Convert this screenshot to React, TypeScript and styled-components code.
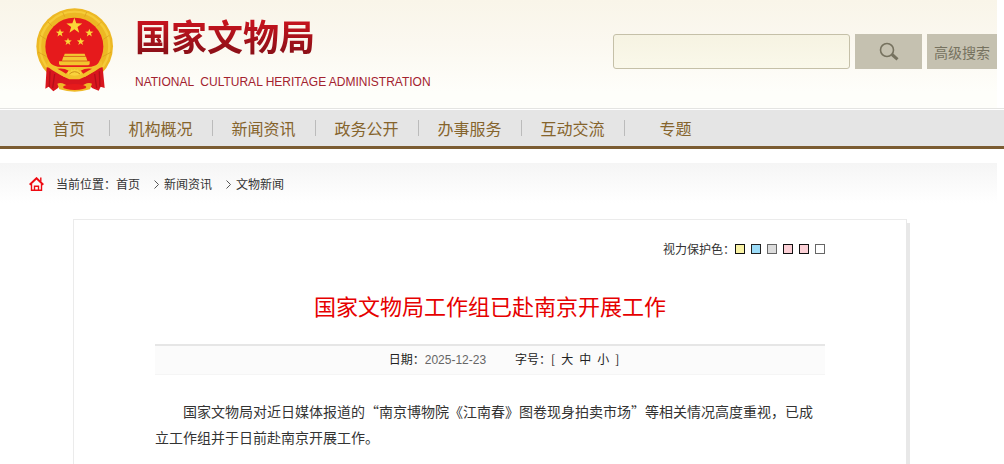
import React from 'react';
import styled, { createGlobalStyle } from 'styled-components';

const GlobalStyle = createGlobalStyle`
  * { box-sizing: border-box; }
  html { background: #fff; }
  body {
    margin: 0;
    overflow-x: hidden;
    color: #333;
    font: 12px/16px "Noto Sans CJK SC", "Liberation Sans", sans-serif;
  }
  a { color: inherit; text-decoration: none; }
  ul, ol, h1, h2, p { margin: 0; padding: 0; list-style: none; }
`;

const Header = styled.header`
  display: flex;
  justify-content: space-between;
  align-items: flex-start;
  height: 108px;
  margin-right: 7px;
  padding-left: 36px;
  background: linear-gradient(#f9f5e9, #fbf8f0 40%, #fefefa 85%, #fefefa);
`;

const Brand = styled.a`
  display: flex;
  gap: 21px;
  padding-top: 8px;
`;

const Emblem = styled.svg`
  display: block;
  width: 78px;
  height: 84px;
`;

const BrandText = styled.div`
  display: flex;
  flex-direction: column;
  gap: 18px;
  padding-top: 6px;
`;

const SiteName = styled.h1`
  font-size: 36px;
  line-height: 42px;
  font-weight: 700;
  color: transparent;
  background: linear-gradient(#c8141e 15%, #8e1018 90%);
  background-clip: text;
  -webkit-background-clip: text;
`;

const SiteNameEn = styled.span`
  font: 12px/16px "Liberation Sans", Arial, sans-serif;
  color: #a3222f;
  white-space: pre;
`;

const SearchForm = styled.form`
  display: flex;
  gap: 5px;
  padding-top: 34px;
`;

const SearchInput = styled.input`
  width: 237px;
  height: 35px;
  padding: 0 10px;
  border: 1px solid #c5c0a8;
  border-radius: 3px;
  background: linear-gradient(#f6f3e2, #faf8ea);
  font: inherit;
  outline: none;
`;

const SearchButton = styled.button<{ $width: number }>`
  display: flex;
  align-items: center;
  justify-content: center;
  width: ${(p) => p.$width}px;
  height: 35px;
  padding: 0;
  border: 0;
  background: #c5c1b0;
  color: #76725f;
  font: 14px/20px "Noto Sans CJK SC", sans-serif;
  white-space: nowrap;
  cursor: pointer;
`;

const Nav = styled.nav`
  margin-bottom: 14px;
  border-top: 1px solid #e4e4e2;
  border-bottom: 3px solid #7b5c32;
  padding-top: 1px;
`;

const NavList = styled.ul`
  display: flex;
  align-items: center;
  height: 36px;
  padding-left: 30px;
  background: #e5e5e5;
`;

const NavItem = styled.li<{ $first?: boolean }>`
  width: ${(p) => (p.$first ? 79 : 103)}px;
  padding-right: 1px;
  border-left: ${(p) => (p.$first ? '0' : '1px solid #bbb')};
  height: 16px;
  font-size: 16px;
  line-height: 16px;
  text-align: center;
  color: #85642c;
`;

const Breadcrumb = styled.nav`
  display: flex;
  align-items: center;
  height: 40px;
  margin: 0 7px 16px 0;
  padding: 2px 0 0 29px;
  background: linear-gradient(#f5f5f5, #fff);
`;

const HomeIcon = styled.svg`
  width: 15px;
  height: 14px;
  margin-right: 12px;
`;

const Trail = styled.ol`
  display: flex;
`;

const Arrow = styled.svg`
  width: 5px;
  height: 9px;
  margin: 0 5px 0 14px;
`;

const Card = styled.main`
  min-height: 260px;
  margin: 0 97px 0 73px;
  padding: 21px 81px 24px 81px;
  border: 1px solid #ebebeb;
  border-right-color: #e8e8e8;
  box-shadow: 3px 4px 0 #e8e8e8;
`;

const ColorPicker = styled.div`
  display: flex;
  justify-content: flex-end;
  margin-bottom: 32px;
`;

const Swatches = styled.div`
  display: flex;
  align-items: center;
  gap: 6px;
  height: 16px;
`;

const Swatch = styled.button<{ $fill: string; $line: string }>`
  width: 10px;
  height: 10px;
  padding: 0;
  border: 1px solid ${(p) => p.$line};
  background: ${(p) => p.$fill};
  cursor: pointer;
`;

const Title = styled.h2`
  margin-bottom: 22px;
  font-size: 22px;
  line-height: 33px;
  font-weight: 400;
  text-align: center;
  color: #e60000;
`;

const Meta = styled.div`
  display: flex;
  justify-content: center;
  gap: 29px;
  height: 31px;
  padding: 5px 0 0 28px;
  border-top: 2px solid #e6e6e6;
  border-bottom: 1px solid #f5f5f5;
  background: #fbfbfb;
  color: #222;
`;

const DateText = styled.time`
  font-family: "Liberation Sans", Arial, sans-serif;
  color: #666;
`;

const SizePicker = styled.span`
  display: flex;
  align-items: flex-start;
  gap: 6px;
`;

const SizeButton = styled.button`
  height: 16px;
  padding: 0;
  border: 0;
  background: none;
  color: inherit;
  font: inherit;
  line-height: 16px;
  cursor: pointer;
`;

const Paragraph = styled.p`
  margin-top: 23px;
  font-size: 14px;
  line-height: 26px;
  text-indent: 2em;
`;

const star = (cx: number, cy: number, r: number) =>
  Array.from({ length: 10 }, (_, i) => {
    const rad = i % 2 ? r * 0.4 : r;
    const a = (Math.PI / 5) * i - Math.PI / 2;
    return `${(cx + rad * Math.cos(a)).toFixed(1)},${(cy + rad * Math.sin(a)).toFixed(1)}`;
  }).join(' ');

const STARS: [number, number, number][] = [
  [163, 78, 25],
  [120, 99, 13],
  [208, 99, 13],
  [144, 125, 12],
  [182, 125, 12],
];

const NationalEmblem = () => (
  <Emblem viewBox="48 24 234 252" aria-hidden="true">
    <ellipse cx="164" cy="139" rx="115" ry="114" fill="#edb824" />
    <ellipse cx="164" cy="139" rx="104" ry="104" fill="none" stroke="#f5cb38" strokeWidth="7" />
    <g fill="none" stroke="#d79c1c" strokeWidth="2">
      <path d="M54 156l26 14M274 156l-26 14M60 106l18 12M268 106l-18 12M84 66l12 12M244 66l-12 12M128 36l6 14M200 36l-6 14" />
    </g>
    <circle cx="163" cy="140" r="87" fill="#e61a1c" />
    <path
      d="M80 202q16 0 24 10l28 18h64l28-18q8-10 24-10l6 62-12-4-6 12-20-8-16-20h-70l-16 20-14 10-14-14-10 6z"
      fill="#d8161e"
    />
    <path d="M90 214l-2 46M104 222l-6 42M238 214l2 46M224 222l6 42" fill="none" stroke="#b30f18" strokeWidth="4" />
    <path d="M117 184h92v9l-4 3h-84l-4-3z" fill="#f3c42e" />
    <path d="M134 161h60l2 7h-64zM130 170h68l4 12h-76z" fill="#f5c733" />
    <path d="M130 169h68M126 183h76" stroke="#cf9119" strokeWidth="2" />
    <path
      d="M84 182q16 20 44 19h70q30 1 46-19l4 16q-22 16-42 26-16 9-28 14h-30q-12-5-28-14-24-12-40-26z"
      fill="#f2c12c"
    />
    <path d="M112 206q20-3 34 6l-8 9q-14-9-26-15zM216 206q-20-3-34 6l8 9q14-9 26-15z" fill="#e61a1c" />
    <path d="M144 222v-8l7 1 3-7 6 3 4-4 4 4 6-3 3 7 7-1v8q-20 10-40 0z" fill="#f9d23c" />
    <path d="M148 222q16-14 32 0" fill="none" stroke="#cf9119" strokeWidth="3" />
    <path d="M112 226q22 4 34 16h34q14-12 36-16l-8 26q-44 18-88 0z" fill="#d8161e" />
    <path d="M112 251q10-5 22 2l14 7h32l14-7q12-7 22-2l-6 17q-46 14-92 0z" fill="#efb928" />
    <ellipse cx="164" cy="261" rx="35" ry="9" fill="#e61a1c" />
    {STARS.map(([x, y, r]) => (
      <polygon key={`${x}-${y}`} points={star(x, y, r)} fill="#fbd638" />
    ))}
  </Emblem>
);

const NAV = ['首页', '机构概况', '新闻资讯', '政务公开', '办事服务', '互动交流', '专题'];
const TRAIL = ['首页', '新闻资讯', '文物新闻'];
const SWATCHES = [
  { name: '黄色', fill: '#faf3a5', line: '#111' },
  { name: '蓝色', fill: '#9cdcf8', line: '#222' },
  { name: '灰色', fill: '#dcdcdc', line: '#666' },
  { name: '粉色', fill: '#fbd0d6', line: '#111' },
  { name: '浅粉', fill: '#fbd0d6', line: '#111' },
  { name: '白色', fill: '#fff', line: '#666' },
];

export default function App() {
  return (
    <div lang="zh-CN">
      <GlobalStyle />
      <Header>
        <Brand href="#">
          <NationalEmblem />
          <BrandText>
            <SiteName>国家文物局</SiteName>
            <SiteNameEn>{'NATIONAL  CULTURAL HERITAGE ADMINISTRATION'}</SiteNameEn>
          </BrandText>
        </Brand>
        <SearchForm onSubmit={(e) => e.preventDefault()}>
          <SearchInput type="text" aria-label="搜索" />
          <SearchButton type="submit" $width={67} aria-label="搜索">
            <svg width="22" height="20" viewBox="0 0 22 20" fill="none" stroke="currentColor" aria-hidden="true">
              <circle cx="9" cy="8" r="6.5" strokeWidth="1.6" />
              <path d="M14 12.5l5.5 4.8" strokeWidth="3" />
            </svg>
          </SearchButton>
          <SearchButton type="button" $width={70}>高级搜索</SearchButton>
        </SearchForm>
      </Header>
      <Nav aria-label="主导航">
        <NavList>
          {NAV.map((label, i) => (
            <NavItem key={label} $first={i === 0}>
              <a href="#">{label}</a>
            </NavItem>
          ))}
        </NavList>
      </Nav>
      <Breadcrumb aria-label="当前位置">
        <HomeIcon viewBox="0 0 15 14" fill="none" stroke="#ee0a12" aria-hidden="true">
          <path d="M.7 7.8L7.5 1.2l6.8 6.6" strokeWidth="1.9" />
          <path d="M11.8 4.5V.5M2.5 7v6.3h10V7M5.5 13V9.3h4V13" strokeWidth="1.4" />
        </HomeIcon>
        <span>当前位置：</span>
        <Trail>
          {TRAIL.map((label, i) => (
            <li key={label}>
              {i > 0 && (
                <Arrow viewBox="0 0 5 9" fill="none" stroke="#555" aria-hidden="true">
                  <path d="M.5.5l4 4-4 4" />
                </Arrow>
              )}
              <a href="#">{label}</a>
            </li>
          ))}
        </Trail>
      </Breadcrumb>
      <Card>
        <ColorPicker>
          <span>视力保护色：</span>
          <Swatches>
            {SWATCHES.map((s) => (
              <Swatch key={s.name} type="button" aria-label={s.name} $fill={s.fill} $line={s.line} />
            ))}
          </Swatches>
        </ColorPicker>
        <Title>国家文物局工作组已赴南京开展工作</Title>
        <Meta>
          <span>
            日期：<DateText dateTime="2025-12-23">2025-12-23</DateText>
          </span>
          <SizePicker>
            <span>字号：[</span>
            <SizeButton type="button">大</SizeButton>
            <SizeButton type="button">中</SizeButton>
            <SizeButton type="button">小</SizeButton>
            <span>]</span>
          </SizePicker>
        </Meta>
        <Paragraph>
          国家文物局对近日媒体报道的“南京博物院《江南春》图卷现身拍卖市场”等相关情况高度重视，已成立工作组并于日前赴南京开展工作。
        </Paragraph>
      </Card>
    </div>
  );
}
